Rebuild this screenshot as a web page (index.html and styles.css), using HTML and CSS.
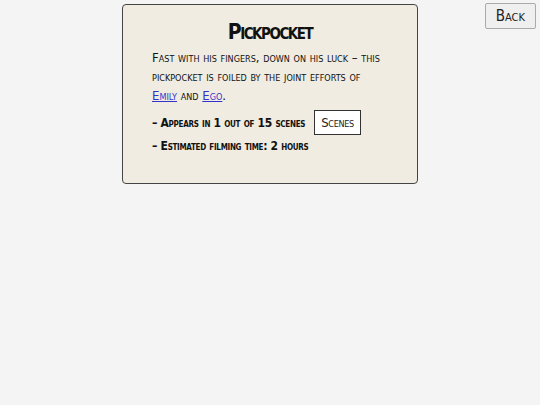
FILE: index.html
```html
<!DOCTYPE html>
<html lang="en">
<head>
  <meta charset="UTF-8" />
  <meta name="viewport" content="width=device-width, initial-scale=1.0"/>
  <title>Pickpocket</title>
  <link rel="stylesheet" href="styles.css">
</head>
<body>

<div class="page">
  <div class="spacer"></div>

  <div class="character-card">
    <h1>Pickpocket</h1>
    <p class="blurb">
      Fast with his fingers, down on his luck &ndash; this pickpocket is foiled by the joint efforts of
      <a href="#emily">Emily</a> and <a href="#ego">Ego</a>.
    </p>
    <div class="stat">
      <span>&ndash; Appears in 1 out of 15 scenes</span>
      <button type="button" class="scenes-btn">Scenes</button>
    </div>
    <div class="stat">
      <span>&ndash; Estimated filming time: 2 hours</span>
    </div>
  </div>

  <div class="nav">
    <button type="button" class="back-btn">Back</button>
  </div>
</div>

</body>
</html>
```

FILE: styles.css
```css
body {
  margin: 0;
  padding: 3px 4px;
  background: #f4f4f4;
  color: #111;
  font-family: "DejaVu Sans Condensed", "DejaVu Sans", sans-serif;
  font-variant: small-caps;
}

.page {
  display: grid;
  grid-template-columns: 1fr 296px 1fr;
  align-items: start;
}

.character-card {
  margin-top: 1px;
  padding: 14px 29px 26px;
  background: #f0ece1;
  border: 1px solid #444;
  border-radius: 4px;
}

.character-card h1 {
  margin: 0 0 3px;
  text-align: center;
  font-size: 21px;
  line-height: 26px;
  font-weight: bold;
  letter-spacing: -1.5px;
}

.blurb {
  margin: 0 0 5px;
  font-size: 13px;
  line-height: 19px;
}

.blurb a { color: #3333cc; }

.stat {
  display: flex;
  align-items: center;
  gap: 9px;
  font-size: 12px;
  font-weight: bold;
  letter-spacing: -0.3px;
  white-space: nowrap;
  min-height: 22px;
}

.scenes-btn {
  padding: 4px 6px;
  background: #fff;
  border: 1px solid #333;
  font: inherit;
  font-size: 13px;
  font-weight: normal;
  letter-spacing: -0.3px;
  color: #222;
}

.nav {
  display: flex;
  justify-content: flex-end;
}

.back-btn {
  padding: 3px 10px;
  background: #efefef;
  border: 1px solid #aaa;
  border-radius: 2px;
  font: inherit;
  font-size: 15px;
  color: #222;
}
```
